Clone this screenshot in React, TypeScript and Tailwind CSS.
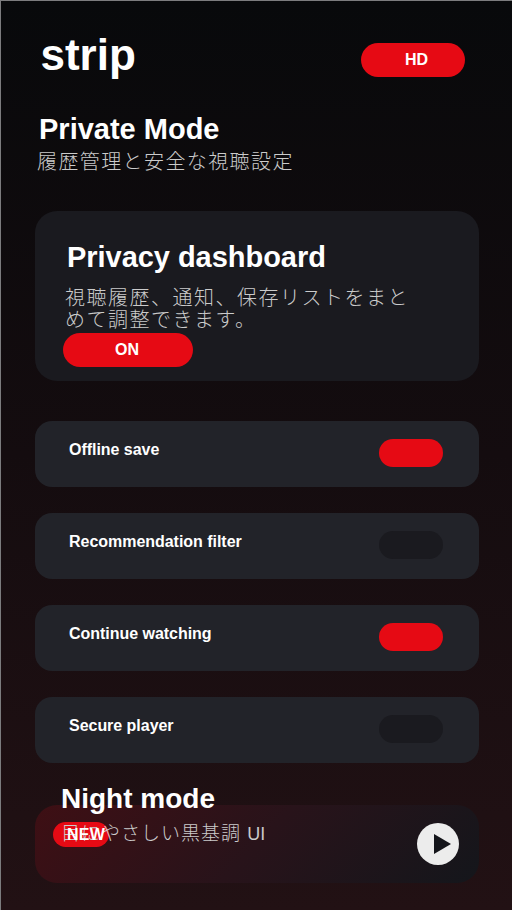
import React from "react";

interface Setting {
  label: string;
  enabled: boolean;
}

const settings: Setting[] = [
  { label: "Offline save", enabled: true },
  { label: "Recommendation filter", enabled: false },
  { label: "Continue watching", enabled: true },
  { label: "Secure player", enabled: false },
];

const SettingRow: React.FC<{ setting: Setting }> = ({ setting }) => {
  return (
    <li className="flex h-[66px] items-start justify-between rounded-[17px] bg-[#222329] pt-[18px] pr-9 pl-[34.5px]">
      <span className="mt-[-1px] text-base leading-6 font-bold tracking-[-0.03px]">{setting.label}</span>
      <span
        className={
          setting.enabled
            ? "h-7 w-16 rounded-full bg-[#e60a14]"
            : "h-7 w-16 rounded-full bg-[#1a1a1f]"
        }
      />
    </li>
  );
};

const App: React.FC = () => {
  return (
    <main className="flex h-[910px] w-[512px] flex-col border-t border-l border-[#7c7c7e] bg-linear-to-b from-[#08090b] via-[#140c0f] to-[#221114] pr-[33.5px] pl-[33.5px] font-['Liberation_Sans','Noto_Sans_CJK_JP',sans-serif] text-white">
      <header className="flex h-[108px] items-start justify-between pt-[28px] pr-[14px] pl-[6px]">
        <h1 className="mt-px text-[44px] leading-[50px] font-bold">strip</h1>
        <span className="mt-[13.5px] flex h-[34px] w-[104px] items-center justify-center rounded-full bg-[#e60a14] pl-2 text-base font-bold">
          HD
        </span>
      </header>

      <section className="h-[101.5px] pl-[2.5px]">
        <h2 className="pl-[2px] text-[29px] leading-10 font-bold">Private Mode</h2>
        <p className="mt-px text-[20px] leading-[25px] font-light tracking-[1.4px] text-[#cbcbcb]">
          履歴管理と安全な視聴設定
        </p>
      </section>

      <section className="h-[170px] rounded-[22px] bg-[#1a1a1f] pt-[26.5px] pl-7">
        <h2 className="pl-[4.5px] text-[29px] leading-10 font-bold tracking-[-0.04px]">Privacy dashboard</h2>
        <p className="mt-[10px] pl-[2.5px] text-[20px] leading-[22px] font-light tracking-[1.5px] text-[#cbcbcb]">
          視聴履歴、通知、保存リストをまと
          <br />
          めて調整できます。
        </p>
        <span className="mt-[2px] flex h-[34px] w-[130px] items-center justify-center rounded-full bg-[#e60a14] pr-px text-base font-bold">
          ON
        </span>
      </section>

      <ul className="mt-10 flex flex-col gap-[26px]">
        {settings.map((setting) => (
          <SettingRow key={setting.label} setting={setting} />
        ))}
      </ul>

      <section className="relative mt-[42px] flex h-[78px] items-center justify-end rounded-[22px] bg-linear-[135deg] from-[#3e0f14] via-[#28131a] to-[#14161b] pr-5">
        <span className="absolute top-[17px] left-[18px] h-[25px] w-14 rounded-full bg-[#e60a14]" />
        <p className="absolute top-[15px] left-[26.5px] text-[19px] leading-[25px] font-light tracking-[1px] whitespace-nowrap text-[#cbcbcb]">
          目にやさしい黒基調 <span className="text-lg tracking-normal">UI</span>
        </p>
        <span className="absolute top-[18px] left-[32.5px] text-base leading-6 font-bold tracking-[0.3px]">NEW</span>
        <h2 className="absolute top-[-26px] left-[26.5px] text-[28px] leading-10 font-bold">Night mode</h2>
        <button className="h-[42px] w-[42px] rounded-full bg-[#ececec]" aria-label="Play">
          <svg viewBox="0 0 42 42" className="h-full w-full">
            <path d="M17 11 L34 21 L17 31 Z" fill="#14151a" />
          </svg>
        </button>
      </section>
    </main>
  );
};

export default App;
